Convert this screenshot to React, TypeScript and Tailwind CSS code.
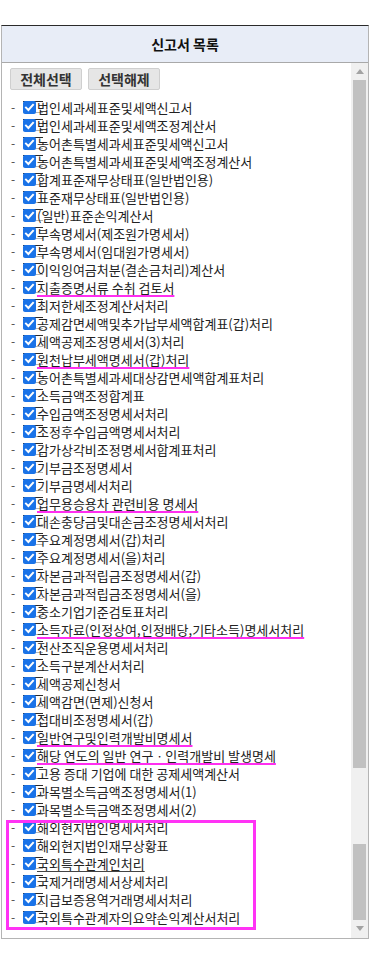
import React from "react";

type Row = {
  label: string;
  mark?: "pink" | "dark";
};

const rows: Row[] = [
  { label: "법인세과세표준및세액신고서" },
  { label: "법인세과세표준및세액조정계산서" },
  { label: "농어촌특별세과세표준및세액신고서" },
  { label: "농어촌특별세과세표준및세액조정계산서" },
  { label: "합계표준재무상태표(일반법인용)" },
  { label: "표준재무상태표(일반법인용)" },
  { label: "(일반)표준손익계산서" },
  { label: "부속명세서(제조원가명세서)" },
  { label: "부속명세서(임대원가명세서)" },
  { label: "이익잉여금처분(결손금처리)계산서" },
  { label: "지출증명서류 수취 검토서", mark: "pink" },
  { label: "최저한세조정계산서처리" },
  { label: "공제감면세액및추가납부세액합계표(갑)처리" },
  { label: "세액공제조정명세서(3)처리" },
  { label: "원천납부세액명세서(갑)처리", mark: "pink" },
  { label: "농어촌특별세과세대상감면세액합계표처리" },
  { label: "소득금액조정합계표" },
  { label: "수입금액조정명세서처리" },
  { label: "조정후수입금액명세서처리" },
  { label: "감가상각비조정명세서합계표처리" },
  { label: "기부금조정명세서" },
  { label: "기부금명세서처리" },
  { label: "업무용승용차 관련비용 명세서", mark: "pink" },
  { label: "대손충당금및대손금조정명세서처리" },
  { label: "주요계정명세서(갑)처리" },
  { label: "주요계정명세서(을)처리" },
  { label: "자본금과적립금조정명세서(갑)" },
  { label: "자본금과적립금조정명세서(을)" },
  { label: "중소기업기준검토표처리" },
  { label: "소득자료(인정상여,인정배당,기타소득)명세서처리", mark: "pink" },
  { label: "전산조직운용명세서처리" },
  { label: "소득구분계산서처리" },
  { label: "세액공제신청서" },
  { label: "세액감면(면제)신청서" },
  { label: "접대비조정명세서(갑)" },
  { label: "일반연구및인력개발비명세서", mark: "pink" },
  { label: "해당 연도의 일반 연구ㆍ인력개발비 발생명세", mark: "pink" },
  { label: "고용 증대 기업에 대한 공제세액계산서" },
  { label: "과목별소득금액조정명세서(1)" },
  { label: "과목별소득금액조정명세서(2)" },
];

const foreignRows: Row[] = [
  { label: "해외현지법인명세서처리" },
  { label: "해외현지법인재무상황표" },
  { label: "국외특수관계인처리", mark: "dark" },
  { label: "국제거래명세서상세처리" },
  { label: "지급보증용역거래명세서처리" },
  { label: "국외특수관계자의요약손익계산서처리" },
];

const CheckBox = () => (
  <span className="inline-flex items-center w-[20px] h-[12px] border-t border-t-[#2b2b2b] border-b border-b-[#b5b5b5] shrink-0">
    <span className="flex items-center justify-center w-[13px] h-[13px] rounded-[2px] bg-[#1a73e8]">
      <svg width="11" height="11" viewBox="0 0 11 11">
        <path d="M2 5.6 L4.4 8 L9 2.8" fill="none" stroke="#fff" strokeWidth="2" strokeLinecap="square" />
      </svg>
    </span>
  </span>
);

const ListRow = ({ row }: { row: Row }) => {
  let textClass = "";
  if (row.mark === "pink") {
    textClass =
      "underline decoration-[#ff2ef0] decoration-[1.5px] underline-offset-[2px] [text-decoration-skip-ink:none] pr-[2px]";
  } else if (row.mark === "dark") {
    textClass = "underline decoration-[#444] decoration-1 underline-offset-[2px] [text-decoration-skip-ink:none]";
  }
  return (
    <div className="flex items-center h-[18px] pl-[9px] whitespace-nowrap">
      <span className="w-[12px] text-[#444] text-[12px] leading-none">-</span>
      <CheckBox />
      <span className={`ml-[-6px] text-[#222] leading-none ${textClass}`}>{row.label}</span>
    </div>
  );
};

const Scrollbar = () => (
  <div className="w-[17px] flex flex-col bg-[#f0f0f0] shrink-0">
    <div className="h-[17px] flex items-center justify-center">
      <svg width="8" height="5" viewBox="0 0 8 5">
        <path d="M0 5 L4 0 L8 5 Z" fill="#a3a3a3" />
      </svg>
    </div>
    <div className="h-[688px] mx-[2px] bg-[#c1c1c1]" />
    <div className="h-[76px]" />
    <div className="h-[76px] mx-[2px] bg-[#c1c1c1]" />
    <div className="h-[17px] flex items-center justify-center">
      <svg width="8" height="5" viewBox="0 0 8 5">
        <path d="M0 0 L8 0 L4 5 Z" fill="#a3a3a3" />
      </svg>
    </div>
  </div>
);

export default function App() {
  return (
    <div
      className="w-[370px] h-[974px] bg-white pt-[25px]"
      style={{ fontFamily: '"Noto Sans CJK KR", "Noto Sans", sans-serif' }}
    >
      <div className="ml-[1px] w-[368px] border-t border-t-[#2a2a2a] border-x border-b border-x-[#b4b4b4] border-b-[#b4b4b4]">
        <div className="h-[37px] bg-[#e8edf7] border-b border-b-[#a9a9a9] flex items-center justify-center">
          <h1 className="text-[14px] font-bold text-[#111]">신고서 목록</h1>
        </div>
        <div className="flex h-[875px]">
          <div className="flex-1 text-[13px]">
            <div className="flex gap-[6px] ml-[8px] mt-[5px]">
              <button className="w-[72px] h-[22px] bg-[#e6e6e6] border border-[#cfcfcf] rounded-[2px] text-[14px] font-bold text-[#333]">
                전체선택
              </button>
              <button className="w-[72px] h-[22px] bg-[#e6e6e6] border border-[#cfcfcf] rounded-[2px] text-[14px] font-bold text-[#333]">
                선택해제
              </button>
            </div>
            <div className="mt-[8px]">
              {rows.map((r) => (
                <ListRow key={r.label} row={r} />
              ))}
              <div className="relative">
                {foreignRows.map((r) => (
                  <ListRow key={r.label} row={r} />
                ))}
                <div className="absolute left-[4px] top-[2px] w-[250px] h-[110px] border-[3px] border-[#ff33f5] pointer-events-none" />
              </div>
            </div>
          </div>
          <Scrollbar />
        </div>
      </div>
    </div>
  );
}
